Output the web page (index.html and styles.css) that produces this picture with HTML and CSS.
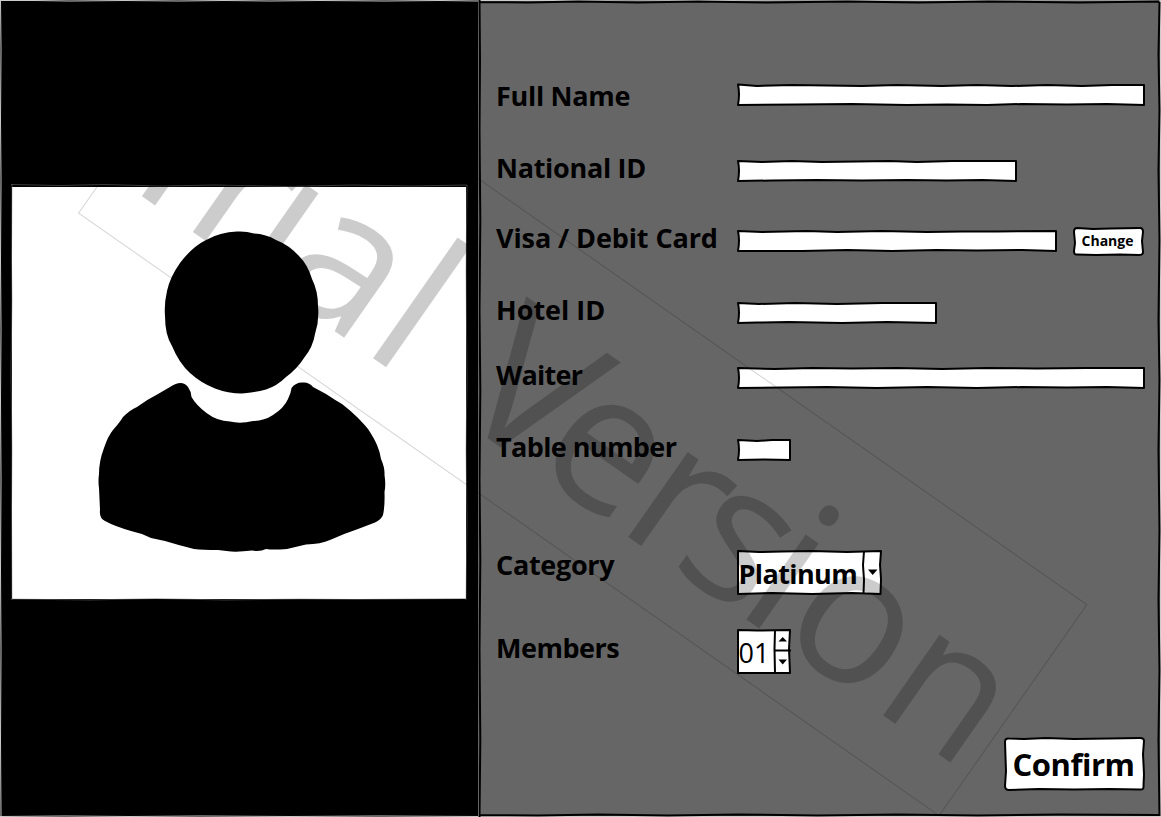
FILE: index.html
```html
<!DOCTYPE html>
<html lang="en">
<head>
<meta charset="utf-8">
<title>Member details</title>
<link rel="stylesheet" href="styles.css">
</head>
<body>
<main class="screen">
  <section class="photo-panel">
    <div class="photo">
      <svg class="person" viewBox="12 187 454 412">
        <path d="M237 231.500Q246 231 254 233.500Q266 234 276 240Q289 245 299 256Q308 265 312 279Q318 291 318 306Q319.500 320 315 334Q313 347 304 358Q297 369 286 377Q277 386 266 389.500Q254 392.500 242 393.500Q228 393.500 215 388.500Q201 383 190 373Q179 363 172 346Q165 335 165 316Q164 304 167 291Q170 277 180 263Q192 247 206 240Q220 232 237 231.500Z"/>
        <path d="M170 387Q182 379 188 387Q191 391 191.500 397Q196 405 206.500 413Q217 421 230 421.500Q240 424 253 421Q264 421 273 415Q284 408 288 399Q291 393 291.500 388Q296 382 303 382.500Q309 382 313 387L326 394Q335 400 342 404Q351 411 357 417Q364 424 368 429Q374 438 377 445Q380 452 381 459Q385 468 384.500 475Q386 485 384.500 492Q385 506 383 515Q381 520 375 522.500L358 529Q343 534 330 540Q321 544 306 544.500L287 549Q273 550 266 549Q260 552 252 550.500Q240 552 231 551.500L218 550Q203 550 194 549Q178 545 165 541L151 538Q141 533 131 531Q114 526 105 521Q99 518 100 510L99 488Q98 481 99 474Q99 461 104 448Q108 436 113 430Q120 422 123 417Q130 410 137 407Q148 399 158 394Z"/>
      </svg>
      <svg class="edge" viewBox="0 0 478 817">
        <path class="scratch" d="M11 184.500L60 185.500L104 184.500L160 186L215 185L288 186.500L353 185L412 186L467 185M11 599L90 600L156 598.500L224 600L300 599L356 599.500L466 598.500M12 184L11.500 260L12 300L11 370L12 450L11.500 510L12 600M467 185L466 270L467 380L466 450L467 520L466 600"/>
      </svg>
    </div>
    <svg class="edge" viewBox="0 0 478 817"><path class="outline-light" d="M0 .5H35L70 1L125 .5L178 1L224 .5L270 1L320 .5L385 1L440 .5L478 1M.5 0L1 50L.5 120L1 180L.5 260L1 330L.5 400L1 480L.5 570L1 650L.5 740L1 817M0 816.500L65 816L130 816.500L200 816L290 816.500L380 816L478 816.500"/></svg>
  </section>

  <section class="form-panel">
    <svg class="edge" viewBox="0 0 683 817">
      <path class="outline-light" d="M0 .5H80L150 0L230 .5L330 0L450 .5L550 0H683M682.500 0V817M0 816.500H683"/>
      <path class="outline-dark" d="M1.500 0L2 60L1.500 130L2.300 220L1.500 310L2.300 390L1.500 480L2.300 560L1.500 650L2.300 740L1.500 817M1 2L50 2.500L100 1.500L160 2.500L220 1.500L290 2.500L370 1.500L440 2.500L510 1.500L600 2.500L681 1.500M681.500 2L680.500 55L681.500 110L680.500 170L681.500 240L680.500 320L681.500 380L680.500 450L681.500 530L680.500 600L681.500 670L680.500 740L681.500 816M2 815L60 815.500L120 814.500L190 815.500L260 814.500L340 815.500L420 814.500L500 815.500L580 814.500L681 815"/>
      <path class="seam" d="M0 0L.5 90L0 180L.5 300L0 420L.5 540L0 660L.5 817"/>
    </svg>

    <div class="row row-name"><label class="label full-name">Full Name</label>
      <div class="field w-full"><svg class="sketch" viewBox="0 0 408 22"><path d="M1 .5L20 2L55 1L90 1.500L125 2L160 1L205 2L240 1L275 2L310 1L345 2L375 1L407 1V21L370 20L330 20.500L285 20L250 21L210 20.500L170 21L115 20L60 20.500L1 21Q3 10 1 .5Z"/></svg></div></div>
    <div class="row row-national"><label class="label national">National ID</label>
      <div class="field w-national"><svg class="sketch" viewBox="0 0 280 22"><path d="M1 1L25 2L55 1L85 2L120 1.500L152 1L180 2L215 1L279 1V21L245 20L210 20.500L170 20L125 20.500L80 20L35 20.500L1 21Q3 10 1 1Z"/></svg></div></div>
    <div class="row row-card"><label class="label card">Visa / Debit Card</label>
      <div class="field w-card"><svg class="sketch" viewBox="0 0 320 22"><path d="M1 1L25 2L70 1L100 2L145 1L190 2L225 1.500L260 1.500L319 1V21L285 20L240 20.500L200 20L155 21L110 20L65 21L1 21Q3 10 1 1Z"/></svg></div>
      <button class="button change"><svg class="sketch" viewBox="0 0 71 29"><path d="M4 1L20 2L38 1.500L67 1Q70 1 70 5L69 14L70 25Q70 28 66 28L47 27.500L23 28L4 27.500Q1 28 1 24L2 16L1 5Q1 1 4 1Z"/></svg><span>Change</span></button></div>
    <div class="row row-hotel"><label class="label hotel">Hotel ID</label>
      <div class="field w-hotel"><svg class="sketch" viewBox="0 0 200 22"><path d="M1 1L22 2L58 1L100 2L145 1L199 1V21L150 20L105 21L52 20L20 20.500L1 21Q3 10 1 1Z"/></svg></div></div>
    <div class="row row-waiter"><label class="label waiter">Waiter</label>
      <div class="field w-full"><svg class="sketch" viewBox="0 0 408 22"><path d="M1 1L38 2L75 1L115 1.500L160 1L205 2L250 1L300 1.500L350 1L407 1V21L370 20L330 20.500L285 20L240 21L190 20L140 21L90 20L45 20.500L1 21Q3 10 1 1Z"/></svg></div></div>
    <div class="row row-table"><label class="label table">Table number</label>
      <div class="field w-table"><svg class="sketch" viewBox="0 0 54 22"><path d="M1 1L20 2L35 1L53 1V21L27 20.500L1 21Q3 10 1 1Z"/></svg></div></div>
    <div class="row row-category"><label class="label category">Category</label>
      <div class="select"><svg class="sketch" viewBox="0 0 145 45"><path d="M1 1L22 2L45 1.500L75 1L110 2L144 1L143 15L144 29L143.500 44L115 43L75 44L35 43L1 44Z"/><path d="M127 1L126 15L127 30L126.500 44"/><path class="arrow" d="M131 19.500H140.500L135.700 25Z"/></svg><span class="select-value">Platinum</span></div></div>
    <div class="row row-members"><label class="label members">Members</label>
      <div class="spinner"><svg class="sketch" viewBox="0 0 54 45"><path d="M1 1L20 1.500L53 1L52 20L53 44H1Z"/><path d="M38 1L37.500 20L38 44M38 21.500H54"/><path class="arrow" d="M41.500 12.500H50L45.700 8ZM41.500 30.500H50L45.700 35.500Z"/></svg><span class="spinner-value">01</span></div></div>
    <button class="button confirm"><svg class="sketch" viewBox="0 0 141 54"><path d="M5 1.500L20 2L42 1L70 2L105 1.500L136 1Q140 1 140 4L139 17L140 37L139.500 49Q140 53 136 52.500L105 52L70 52.500L35 52L5 53Q1 53 1 49L2 34L1.500 20L1 5Q1 1 5 1.500Z"/></svg><span>Confirm</span></button>
  </section>

  <svg class="watermark" viewBox="0 0 1161 817">
    <g transform="translate(227 2) rotate(35)">
      <rect x="-.5" y=".5" width="1050.500" height="257.500"/>
      <text y="208" x="-3.700 87.300 152.300 196.500 307.300 360 414 514.500 619 684 763 813 931">Trial Versio<tspan class="tail">n</tspan></text>
    </g>
  </svg>
</main>
</body>
</html>
```
FILE: styles.css
```css
* { box-sizing: border-box; }
body { margin: 0; background: #fff; font-family: "Open Sans", "Noto Sans", sans-serif; color: #000; }
.screen { position: relative; display: grid; grid-template-columns: 478px 683px; width: 1161px; height: 817px; overflow: hidden; }

.photo-panel { position: relative; background: #000; padding: 187px 12px 0; }
.photo { width: 454px; height: 412px; background: #fff; }
.person { display: block; width: 454px; height: 412px; }
.edge { position: absolute; left: 0; top: 0; width: 100%; height: 100%; fill: none; pointer-events: none; }
.scratch { stroke: #777; stroke-width: .5; }
.outline-light { stroke: #ccc; stroke-width: 1; }
.outline-dark { stroke: #000; stroke-width: 2; }
.seam { stroke: #666; stroke-width: 1; }

.form-panel { position: relative; display: flex; flex-direction: column; background: #666; padding: 80px 16px 0 18px; }
.row { display: flex; align-items: flex-start; flex: none; }
.row-name { height: 72px; }
.row-national { height: 70px; }
.row-card { height: 72px; }
.row-hotel { height: 65px; }
.row-waiter { height: 72px; }
.row-table { height: 118px; }
.row-category { height: 80px; }
.row-members { height: 108px; }

.label { width: 240.5px; flex: none; padding-top: 1px; font-size: 27px; line-height: 30px; font-weight: 700; white-space: nowrap; }
.row-members .label { padding-top: 4px; }
.full-name { letter-spacing: -.3px; }
.national { letter-spacing: -.3px; }
.card { letter-spacing: -.1px; }
.waiter { letter-spacing: -.7px; }
.table { letter-spacing: -.6px; }
.category { letter-spacing: -.3px; }
.members { letter-spacing: -.5px; }

.field { position: relative; height: 22px; margin-top: 7.5px; flex: none; }
.row-name .field { margin-top: 3.5px; }
.w-full { width: 408px; }
.w-national { width: 280px; }
.w-card { width: 320px; }
.w-hotel { width: 200px; }
.w-table { width: 54px; }

.sketch { position: absolute; left: 0; top: 0; width: 100%; height: 100%; overflow: visible; fill: #fff; stroke: #000; stroke-width: 2; stroke-linejoin: round; }
.arrow { fill: #000; stroke: none; }

.button { position: relative; padding: 0; border: 0; background: none; color: #000; font-family: inherit; font-weight: 700; }
.button span { position: relative; display: block; white-space: nowrap; }
.change { width: 71px; height: 29px; margin: 4.5px 0 0 16.5px; font-size: 14px; line-height: 28px; }
.change span { left: -1px; }
.confirm { width: 141px; height: 54px; align-self: flex-end; flex: none; font-size: 31px; line-height: 54px; letter-spacing: -.5px; }
.confirm span { left: -1px; }

.select { position: relative; width: 145px; height: 45px; margin-top: .5px; }
.spinner { position: relative; width: 54px; height: 45px; margin-top: -.5px; }
.select-value, .spinner-value { position: relative; display: block; padding-left: 2px; font-size: 27px; line-height: 48px; white-space: nowrap; }
.select-value { font-weight: 700; letter-spacing: -.6px; }

.watermark { position: absolute; left: 0; top: 0; width: 1161px; height: 817px; pointer-events: none; }
.watermark rect { fill: none; stroke: #000; stroke-opacity: .17; stroke-width: 1; }
.watermark text { font-size: 194px; fill: #000; fill-opacity: .2; }
.watermark .tail { font-size: 184px; }
```
